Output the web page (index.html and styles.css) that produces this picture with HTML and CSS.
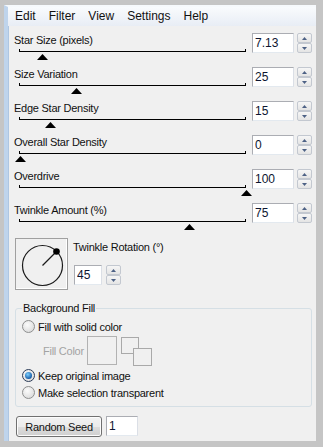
FILE: index.html
```html
<!DOCTYPE html>
<html>
<head>
  <title>Stars</title>
  <link rel="stylesheet" href="styles.css">
</head>
<body>
  <div class="window">
    <div class="menubar">
      <span>Edit</span><span>Filter</span><span>View</span><span>Settings</span><span>Help</span>
    </div>
    <div class="content">

      <div class="row">
        <div class="slider">
          <div class="label">Star Size (pixels)</div>
          <div class="track"><div class="thumb" style="left: 17px"></div></div>
        </div>
        <input class="num" type="text" value="7.13">
        <div class="spin"><span class="up"></span><span class="down"></span></div>
      </div>

      <div class="row">
        <div class="slider">
          <div class="label">Size Variation</div>
          <div class="track"><div class="thumb" style="left: 51px"></div></div>
        </div>
        <input class="num" type="text" value="25">
        <div class="spin"><span class="up"></span><span class="down"></span></div>
      </div>

      <div class="row">
        <div class="slider">
          <div class="label">Edge Star Density</div>
          <div class="track"><div class="thumb" style="left: 25px"></div></div>
        </div>
        <input class="num" type="text" value="15">
        <div class="spin"><span class="up"></span><span class="down"></span></div>
      </div>

      <div class="row">
        <div class="slider">
          <div class="label">Overall Star Density</div>
          <div class="track"><div class="thumb" style="left: -5px"></div></div>
        </div>
        <input class="num" type="text" value="0">
        <div class="spin"><span class="up"></span><span class="down"></span></div>
      </div>

      <div class="row">
        <div class="slider">
          <div class="label">Overdrive</div>
          <div class="track"><div class="thumb" style="left: 221px"></div></div>
        </div>
        <input class="num" type="text" value="100">
        <div class="spin"><span class="up"></span><span class="down"></span></div>
      </div>

      <div class="row">
        <div class="slider">
          <div class="label">Twinkle Amount (%)</div>
          <div class="track"><div class="thumb" style="left: 164px"></div></div>
        </div>
        <input class="num" type="text" value="75">
        <div class="spin"><span class="up"></span><span class="down"></span></div>
      </div>

      <div class="rotation">
        <div class="dial">
          <svg width="51" height="50" viewBox="0 0 51 50">
            <circle cx="26.5" cy="26.5" r="20" fill="none" stroke="#1a1a1a" stroke-width="1.2"/>
            <line x1="26.5" y1="26.5" x2="40.5" y2="12.5" stroke="#1a1a1a" stroke-width="1.2"/>
            <circle cx="40.5" cy="12.5" r="3.3" fill="#000"/>
          </svg>
        </div>
        <div class="rot-side">
          <div class="label">Twinkle Rotation (°)</div>
          <div class="rot-input">
            <input class="num short" type="text" value="45">
            <div class="spin"><span class="up"></span><span class="down"></span></div>
          </div>
        </div>
      </div>

      <fieldset class="fill">
        <legend>Background Fill</legend>
        <div class="radio"><span class="dot"></span>Fill with solid color</div>
        <div class="fill-color">
          <span class="fc-label">Fill Color</span>
          <span class="swatch"></span>
          <svg width="32" height="30" viewBox="0 0 32 30">
            <rect x="1.5" y="1.5" width="17" height="16" fill="#f0f0f0" stroke="#a9a9a9"/>
            <rect x="13.5" y="12.5" width="18" height="17" fill="#f0f0f0" stroke="#a9a9a9"/>
          </svg>
        </div>
        <div class="radio"><span class="dot checked"></span>Keep original image</div>
        <div class="radio"><span class="dot"></span>Make selection transparent</div>
      </fieldset>

      <div class="seed">
        <button>Random Seed</button>
        <input class="num seed-num" type="text" value="1">
      </div>

    </div>
  </div>
</body>
</html>
```

FILE: styles.css
```css
body {
  margin: 0;
  background-color: #c5c5c5;
  font-family: "Liberation Sans", Arial, sans-serif;
  font-size: 11px;
  letter-spacing: -0.25px;
  color: #111;
}
.window {
  margin: 5px 7px 0 4px;
  height: 436px;
  box-sizing: border-box;
  border-left: 4px solid #bfd4ec;
  border-top: 2px solid #f6f9fc;
  background-color: #f0f0f0;
  box-shadow: inset 1px 0 0 #aec6e2;
}
.menubar {
  display: flex;
  gap: 13px;
  height: 19px;
  line-height: 19px;
  padding-left: 7px;
  font-size: 12px;
  letter-spacing: 0;
  background: linear-gradient(#f9fbfd, #e8edf5);
}
.content {
  padding: 7px 4px 0 6px;
}
.row {
  display: flex;
  height: 34px;
}
.slider {
  width: 238px;
}
.label {
  line-height: 14px;
}
.track {
  position: relative;
  margin: 2px 6px 0 5px;
  height: 2px;
  border: 1px solid #000;
  border-top: none;
}
.thumb {
  position: absolute;
  top: 5px;
  width: 11px;
  height: 6px;
  background-color: #000;
  clip-path: polygon(50% 0, 100% 100%, 0 100%);
}
.num {
  width: 42px;
  height: 20px;
  box-sizing: border-box;
  margin: 0;
  padding: 0 0 0 2px;
  border: 1px solid;
  border-color: #abadb3 #dbdfe6 #e3e9ef #abadb3;
  background-color: #fff;
  font-family: "Liberation Sans", Arial, sans-serif;
  font-size: 12px;
  color: #0d1530;
  outline: none;
}
.spin {
  display: flex;
  flex-direction: column;
  width: 15px;
  height: 20px;
  margin-left: 3px;
}
.spin span {
  position: relative;
  flex: 1;
  border: 1px solid #c3c8d0;
  border-radius: 2px;
  background: linear-gradient(#f6f6f6, #e4e4e4);
}
.spin span::after {
  content: "";
  position: absolute;
  left: 4px;
  top: 3px;
  width: 5px;
  height: 3px;
  background-color: #4d6185;
}
.spin .up::after {
  clip-path: polygon(50% 0, 100% 100%, 0 100%);
}
.spin .down::after {
  clip-path: polygon(0 0, 100% 0, 50% 100%);
}
.rotation {
  display: flex;
  margin-top: 1px;
  height: 52px;
}
.dial {
  width: 53px;
  height: 52px;
  box-sizing: border-box;
  margin-left: 1px;
  border: 1px solid #a0a0a0;
  box-shadow: inset -1px -1px 0 #fff;
}
.dial svg {
  display: block;
}
.rot-side {
  margin-left: 5px;
}
.rot-side .label {
  margin-top: 2px;
}
.rot-input {
  display: flex;
  margin: 11px 0 0 1px;
}
.num.short {
  width: 28px;
}
.rot-input .spin {
  margin-left: 4px;
}
.fill {
  margin: 11px 0 0 1px;
  padding: 3px 0 5px 6px;
  border: 1px solid #d5dfe5;
  border-radius: 3px;
}
.fill legend {
  padding: 0 1px;
  line-height: 14px;
}
.radio {
  display: flex;
  align-items: center;
  gap: 3px;
  height: 17px;
}
.dot {
  position: relative;
  width: 13px;
  height: 13px;
  box-sizing: border-box;
  border: 1px solid #8e8f8f;
  border-radius: 50%;
  background: radial-gradient(circle at 40% 35%, #fbfbfb, #d4d4d4);
}
.dot.checked {
  border-color: #2c3c58;
}
.dot.checked::after {
  content: "";
  position: absolute;
  left: 2px;
  top: 2px;
  width: 7px;
  height: 7px;
  border-radius: 50%;
  background: radial-gradient(circle at 40% 35%, #7cd0ff, #1a5ea8 70%, #0b3a75);
}
.fill-color {
  display: flex;
  align-items: center;
  height: 29px;
  margin-top: 1px;
  margin-bottom: 2px;
}
.fc-label {
  width: 44px;
  margin-left: 21px;
  color: #a3a3a3;
}
.swatch {
  width: 30px;
  height: 29px;
  box-sizing: border-box;
  border: 1px solid #b2b2b2;
}
.fill-color svg {
  display: block;
  margin-left: 3px;
}
.seed {
  display: flex;
  gap: 4px;
  margin: 9px 0 0 2px;
}
.seed button {
  width: 86px;
  height: 21px;
  padding: 0;
  border: 1px solid #707070;
  border-radius: 3px;
  background: linear-gradient(#f2f2f2 0%, #ebebeb 50%, #dddddd 51%, #cfcfcf 100%);
  box-shadow: inset 0 0 0 1px #fcfcfc;
  font-family: "Liberation Sans", Arial, sans-serif;
  font-size: 11px;
  letter-spacing: -0.25px;
  color: #111;
}
.num.seed-num {
  width: 32px;
}
```
